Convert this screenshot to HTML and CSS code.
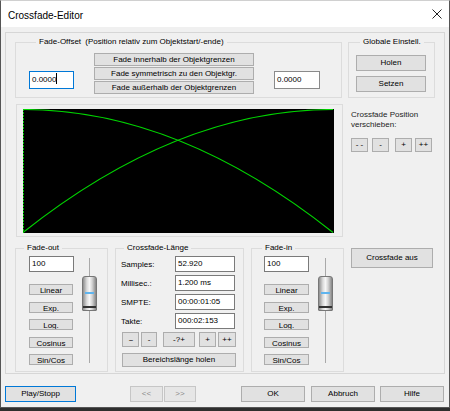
FILE: index.html
```html
<!DOCTYPE html>
<html lang="de">
<head>
  <meta charset="UTF-8">
  <title>Crossfade-Editor</title>
  <link rel="stylesheet" href="styles.css">
</head>
<body>

  <div class="window">
    <div class="titlebar">
      <span class="title">Crossfade-Editor</span>
      <svg class="close-icon" width="10" height="10" viewBox="0 0 10 10">
        <path d="M0.5 0.5 L9.5 9.5 M9.5 0.5 L0.5 9.5" stroke="#222" stroke-width="1" fill="none"/>
      </svg>
    </div>

    <div class="client">
      <div class="panel">

        <div class="row-top">
          <div class="group offset-group">
            <span class="group-label offset-label">Fade-Offset <span class="hint">(Position relativ zum Objektstart/-ende)</span></span>
            <div class="field offset-field focused">0.0000<span class="caret"></span></div>
            <div class="offset-buttons">
              <button class="btn offset-btn">Fade innerhalb der Objektgrenzen</button>
              <button class="btn offset-btn">Fade symmetrisch zu den Objektgr.</button>
              <button class="btn offset-btn">Fade außerhalb der Objektgrenzen</button>
            </div>
            <div class="field offset-field right-field">0.0000</div>
          </div>

          <div class="group global-group">
            <span class="group-label global-label">Globale Einstell.</span>
            <button class="btn global-btn">Holen</button>
            <button class="btn global-btn">Setzen</button>
          </div>
        </div>

        <div class="row-mid">
          <div class="graph-box">
            <svg class="graph" width="311" height="124" viewBox="0 0 311 124">
              <rect width="311" height="124" fill="#000"/>
              <line x1="0.5" y1="0" x2="0.5" y2="124" stroke="#00c000" stroke-dasharray="2 1"/>
              <path d="M0 0.5 Q155 0.5 310 123.5" fill="none" stroke="#00d400" stroke-width="1.1"/>
              <path d="M0 123.5 Q155 0.5 310 0.5" fill="none" stroke="#00d400" stroke-width="1.1"/>
            </svg>
          </div>
          <div class="shift">
            <p class="shift-text">Crossfade Position<br>verschieben:</p>
            <div class="shift-buttons">
              <button class="btn shift-btn">- -</button>
              <button class="btn shift-btn">-</button>
              <button class="btn shift-btn">+</button>
              <button class="btn shift-btn">++</button>
            </div>
          </div>
        </div>

        <div class="row-bottom">
          <div class="group fade-group">
            <span class="group-label">Fade-out</span>
            <div class="fade-col">
              <div class="field fade-field">100</div>
              <div class="fade-buttons">
                <button class="btn fade-btn">Linear</button>
                <button class="btn fade-btn">Exp.</button>
                <button class="btn fade-btn">Log.</button>
                <button class="btn fade-btn">Cosinus</button>
                <button class="btn fade-btn">Sin/Cos</button>
              </div>
            </div>
            <div class="slider"><div class="thumb"></div></div>
          </div>

          <div class="group length-group">
            <span class="group-label">Crossfade-Länge</span>
            <div class="length-row"><span class="length-label">Samples:</span><div class="field length-field">52.920</div></div>
            <div class="length-row"><span class="length-label">Millisec.:</span><div class="field length-field">1.200 ms</div></div>
            <div class="length-row"><span class="length-label">SMPTE:</span><div class="field length-field">00:00:01:05</div></div>
            <div class="length-row"><span class="length-label">Takte:</span><div class="field length-field">000:02:153</div></div>
            <div class="step-buttons">
              <button class="btn step-btn step-dd">--</button>
              <button class="btn step-btn step-d">-</button>
              <button class="btn step-btn step-q">-?+</button>
              <button class="btn step-btn step-p">+</button>
              <button class="btn step-btn step-pp">++</button>
            </div>
            <button class="btn range-btn">Bereichslänge holen</button>
          </div>

          <div class="group fade-group fade-in">
            <span class="group-label">Fade-in</span>
            <div class="fade-col">
              <div class="field fade-field">100</div>
              <div class="fade-buttons">
                <button class="btn fade-btn">Linear</button>
                <button class="btn fade-btn">Exp.</button>
                <button class="btn fade-btn">Log.</button>
                <button class="btn fade-btn">Cosinus</button>
                <button class="btn fade-btn">Sin/Cos</button>
              </div>
            </div>
            <div class="slider"><div class="thumb"></div></div>
          </div>

          <button class="btn off-btn">Crossfade aus</button>
        </div>

      </div>

      <div class="footer">
        <button class="btn foot-btn play-btn">Play/Stopp</button>
        <button class="btn foot-btn nav-btn prev-btn">&lt;&lt;</button>
        <button class="btn foot-btn nav-btn next-btn">&gt;&gt;</button>
        <button class="btn foot-btn ok-btn">OK</button>
        <button class="btn foot-btn cancel-btn">Abbruch</button>
        <button class="btn foot-btn help-btn">Hilfe</button>
      </div>
    </div>
  </div>

</body>
</html>
```

FILE: styles.css
```css
* {
  margin: 0;
  padding: 0;
  box-sizing: border-box;
}

body {
  background: #2e2e2e;
  width: 450px;
  height: 411px;
  overflow: hidden;
  font-family: 'Liberation Sans', Arial, sans-serif;
  font-size: 8px;
  color: #000;
}

.window {
  width: 450px;
  height: 408px;
  border: 1px solid #555;
  border-top-color: #d0d0d0;
  background: #f0f0f0;
}

.titlebar {
  height: 26px;
  background: #fff;
  display: flex;
  align-items: center;
  justify-content: space-between;
  padding: 0 7px 0 7px;
}

.title {
  font-size: 10px;
  padding-top: 2px;
}

.close-icon {
  display: block;
}

.client {
  height: 380px;
  padding: 5px 4px 0;
}

.panel {
  width: 440px;
  height: 342px;
  border: 1px solid #d6d6d6;
  padding: 9px 0 0 9px;
}

/* generic controls */

.btn {
  display: block;
  font-family: inherit;
  font-size: 8px;
  color: #000;
  background: #e1e1e1;
  border: 1px solid #adadad;
  text-align: center;
  padding: 0;
  overflow: hidden;
  white-space: nowrap;
}

.field {
  background: #fff;
  border: 1px solid #7a7a7a;
  height: 16px;
  line-height: 14px;
  padding-left: 2px;
  white-space: nowrap;
}

.group {
  position: relative;
  border: 1px solid #dcdcdc;
}

.group-label {
  position: absolute;
  top: -6px;
  left: 8px;
  line-height: 10px;
  padding: 0 3px;
  background: #f0f0f0;
  white-space: nowrap;
}

/* top row */

.row-top {
  display: flex;
}

.offset-group {
  width: 327px;
  height: 56px;
  display: flex;
  align-items: flex-start;
}

.offset-label {
  left: 20px;
}

.hint {
  margin-left: 2px;
}

.offset-field {
  width: 45px;
  height: 18px;
  line-height: 16px;
  margin: 28px 0 0 13px;
}

.offset-field.focused {
  border-color: #0078d7;
}

.caret {
  display: inline-block;
  width: 1px;
  height: 11px;
  background: #000;
  vertical-align: -2px;
}

.right-field {
  width: 46px;
  margin-left: 20px;
  border-color: #8a8a8a;
}

.offset-buttons {
  display: flex;
  flex-direction: column;
  gap: 1px;
  margin: 10px 0 0 20px;
}

.offset-btn {
  width: 160px;
  height: 13px;
  line-height: 11px;
}

.global-group {
  width: 87px;
  height: 56px;
  margin-left: 6px;
  display: flex;
  flex-direction: column;
  gap: 5px;
  padding: 12px 0 0 7px;
}

.global-label {
  left: 11px;
}

.global-btn {
  width: 70px;
  height: 16px;
  line-height: 14px;
}

/* graph row */

.row-mid {
  display: flex;
  margin-top: 6px;
}

.graph-box {
  width: 327px;
  height: 133px;
  margin-left: 1px;
  border: 1px solid #dcdcdc;
  padding: 4px 0 0 6px;
}

.graph {
  display: block;
}

.shift {
  margin-left: 8px;
  padding-top: 6px;
}

.shift-text {
  line-height: 10px;
  color: #222;
}

.shift-buttons {
  display: flex;
  margin-top: 8px;
}

.shift-btn {
  width: 17px;
  height: 14px;
  line-height: 12px;
}

.shift-btn:nth-child(2) { margin-left: 4px; }
.shift-btn:nth-child(3) { margin-left: 6px; }
.shift-btn:nth-child(4) { margin-left: 3px; }

/* bottom row */

.row-bottom {
  display: flex;
  align-items: flex-start;
  margin-top: 11px;
}

.fade-group {
  width: 93px;
  height: 124px;
  display: flex;
  align-items: flex-start;
}

.fade-col {
  margin: 7px 0 0 13px;
}

.fade-in .fade-col {
  margin-left: 12px;
}

.fade-field {
  width: 45px;
}

.fade-buttons {
  display: flex;
  flex-direction: column;
  gap: 6.5px;
  margin-top: 12px;
}

.fade-btn {
  width: 44px;
  height: 11px;
  line-height: 11px;
}

.fade-in .fade-btn {
  width: 45px;
}

.slider {
  position: relative;
  width: 15px;
  height: 105px;
  margin: 9px 0 0 8px;
}

.fade-in .slider {
  margin-left: 9px;
}

.slider::before {
  content: "";
  position: absolute;
  left: 7px;
  top: 0;
  bottom: 0;
  width: 1px;
  background: #a9a9a9;
}

.thumb {
  position: absolute;
  left: 0;
  top: 18px;
  width: 15px;
  height: 35px;
  border: 1px solid #777;
  border-radius: 3px 3px 1px 1px;
  background: linear-gradient(to right, #8e8e8e 0%, #dcdcdc 30%, #f6f6f6 50%, #d4d4d4 70%, #858585 100%);
}

.thumb::before {
  content: "";
  position: absolute;
  left: 2px;
  right: 2px;
  top: 15px;
  height: 2px;
  background: #5fb4ee;
}

.thumb::after {
  content: "";
  position: absolute;
  left: 0;
  right: 0;
  bottom: 2px;
  height: 2px;
  background: #333;
}

.length-group {
  width: 129px;
  height: 124px;
  margin-left: 7px;
  padding: 7px 0 0 5px;
  display: flex;
  flex-direction: column;
  gap: 3px;
}

.length-group .group-label {
  left: 8px;
}

.length-row {
  display: flex;
  align-items: center;
  height: 16px;
}

.length-label {
  width: 54px;
}

.length-field {
  width: 60px;
}

.step-buttons {
  display: flex;
  margin-left: 1px;
}

.step-btn {
  height: 15px;
  line-height: 13px;
}

.step-dd { width: 17px; letter-spacing: -1px; }
.step-d { width: 16px; margin-left: 2px; }
.step-q { width: 32px; margin-left: 6px; }
.step-p { width: 17px; margin-left: 4px; }
.step-pp { width: 18px; margin-left: 2px; }

.range-btn {
  width: 114px;
  height: 14px;
  line-height: 12px;
  margin: 3px 0 0 1px;
}

.fade-in {
  margin-left: 7px;
}

.fade-in .group-label {
  left: 10px;
}

.off-btn {
  width: 82px;
  height: 20px;
  line-height: 18px;
  margin-left: 7px;
}

/* footer */

.footer {
  display: flex;
  margin-top: 12px;
}

.foot-btn {
  height: 16px;
  line-height: 14px;
}

.play-btn {
  width: 71px;
  border-color: #0078d7;
}

.nav-btn {
  width: 33px;
  color: #8a8a8a;
  background: #e6e6e6;
  border-color: #c6c6c6;
}

.prev-btn { margin-left: 54px; }
.next-btn { margin-left: 1px; width: 32px; }
.ok-btn { width: 64px; margin-left: 45px; }
.cancel-btn { width: 64px; margin-left: 6px; }
.help-btn { width: 64px; margin-left: 5px; }
```
